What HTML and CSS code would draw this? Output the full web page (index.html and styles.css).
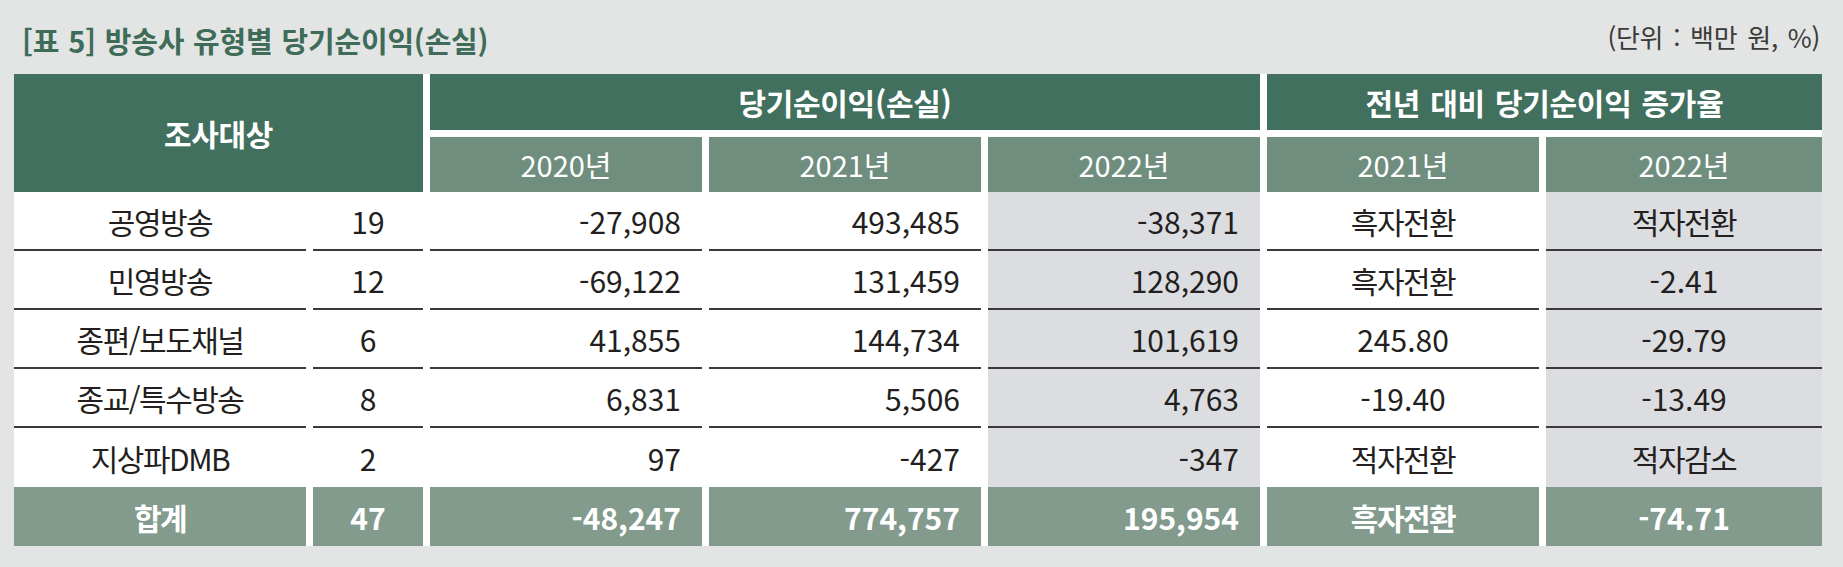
FILE: index.html
```html
<!DOCTYPE html>
<html lang="ko">
<head>
<meta charset="utf-8">
<title>방송사 유형별 당기순이익(손실)</title>
<link rel="stylesheet" href="styles.css">
</head>
<body>
<div class="page">
  <div class="caption">
    <h1 class="title">[표 5] 방송사 유형별 당기순이익(손실)</h1>
    <span class="unit">(단위 : 백만 원, %)</span>
  </div>
  <div class="tbl">
    <div class="hd corner">조사대상</div>
    <div class="hd span3">당기순이익(손실)</div>
    <div class="hd span2">전년 대비 당기순이익 증가율</div>
    <div class="sub">2020년</div>
    <div class="sub">2021년</div>
    <div class="sub">2022년</div>
    <div class="sub">2021년</div>
    <div class="sub">2022년</div>

    <div class="cell ko">공영방송</div>
    <div class="cell">19</div>
    <div class="cell num">-27,908</div>
    <div class="cell num">493,485</div>
    <div class="cell num g">-38,371</div>
    <div class="cell ko">흑자전환</div>
    <div class="cell ko g">적자전환</div>

    <div class="cell ko">민영방송</div>
    <div class="cell">12</div>
    <div class="cell num">-69,122</div>
    <div class="cell num">131,459</div>
    <div class="cell num g">128,290</div>
    <div class="cell ko">흑자전환</div>
    <div class="cell g">-2.41</div>

    <div class="cell ko">종편/보도채널</div>
    <div class="cell">6</div>
    <div class="cell num">41,855</div>
    <div class="cell num">144,734</div>
    <div class="cell num g">101,619</div>
    <div class="cell">245.80</div>
    <div class="cell g">-29.79</div>

    <div class="cell ko">종교/특수방송</div>
    <div class="cell">8</div>
    <div class="cell num">6,831</div>
    <div class="cell num">5,506</div>
    <div class="cell num g">4,763</div>
    <div class="cell">-19.40</div>
    <div class="cell g">-13.49</div>

    <div class="cell ko last">지상파DMB</div>
    <div class="cell last">2</div>
    <div class="cell num last">97</div>
    <div class="cell num last">-427</div>
    <div class="cell num g last">-347</div>
    <div class="cell ko last">적자전환</div>
    <div class="cell ko g last">적자감소</div>

    <div class="tot ko">합계</div>
    <div class="tot">47</div>
    <div class="tot num">-48,247</div>
    <div class="tot num">774,757</div>
    <div class="tot num">195,954</div>
    <div class="tot ko">흑자전환</div>
    <div class="tot">-74.71</div>
  </div>
</div>
</body>
</html>
```

FILE: styles.css
```css
html, body {
  margin: 0;
  padding: 0;
  background: #e3e5e4;
}

body {
  font-family: "Noto Sans CJK KR", "Noto Sans", sans-serif;
  color: #231f20;
}

.page {
  padding: 0 21px 0 14px;
}

.caption {
  height: 74px;
  box-sizing: border-box;
  display: flex;
  justify-content: space-between;
  align-items: flex-start;
}

.title {
  margin: 26px 0 0 8px;
  font-size: 29px;
  line-height: 29px;
  font-weight: 700;
  color: #3f6c58;
  letter-spacing: -0.2px;
  word-spacing: 1px;
}

.unit {
  margin: 24px 2px 0 0;
  font-size: 26px;
  line-height: 26px;
  color: #3a3a3a;
  letter-spacing: -0.3px;
  word-spacing: 3px;
}

.tbl {
  display: grid;
  grid-template-columns: 292px 110px 272px 272px 272px 272px 276px;
  grid-template-rows: 56px 62px repeat(5, 59px) 59px;
  column-gap: 7px;
  background: #ffffff;
  width: 1808px;
}

.hd,
.sub,
.cell,
.tot {
  display: flex;
  align-items: center;
  justify-content: center;
  font-size: 30px;
  line-height: 1;
  white-space: nowrap;
  box-sizing: border-box;
}

.hd {
  background: #42705e;
  color: #ffffff;
  font-weight: 700;
  font-size: 30px;
  letter-spacing: -0.3px;
  word-spacing: 2px;
}

.corner {
  grid-column: 1 / 3;
  grid-row: 1 / 3;
}

.span3 {
  grid-column: 3 / 6;
  grid-row: 1;
}

.span2 {
  grid-column: 6 / 8;
  grid-row: 1;
}

.sub {
  grid-row: 2;
  background: #6f8e7e;
  border-top: 7px solid #ffffff;
  color: #ffffff;
  font-weight: 400;
  font-size: 29px;
}

.cell {
  border-bottom: 2px solid #3a3a3a;
  background: #ffffff;
}

.cell.last {
  border-bottom: none;
}

.cell.g {
  background: #dcdde0;
}

.ko {
  letter-spacing: -1.5px;
}

.num {
  justify-content: flex-end;
  padding-right: 21px;
}

.tot {
  background: #829b8d;
  color: #ffffff;
  font-weight: 700;
}
```
